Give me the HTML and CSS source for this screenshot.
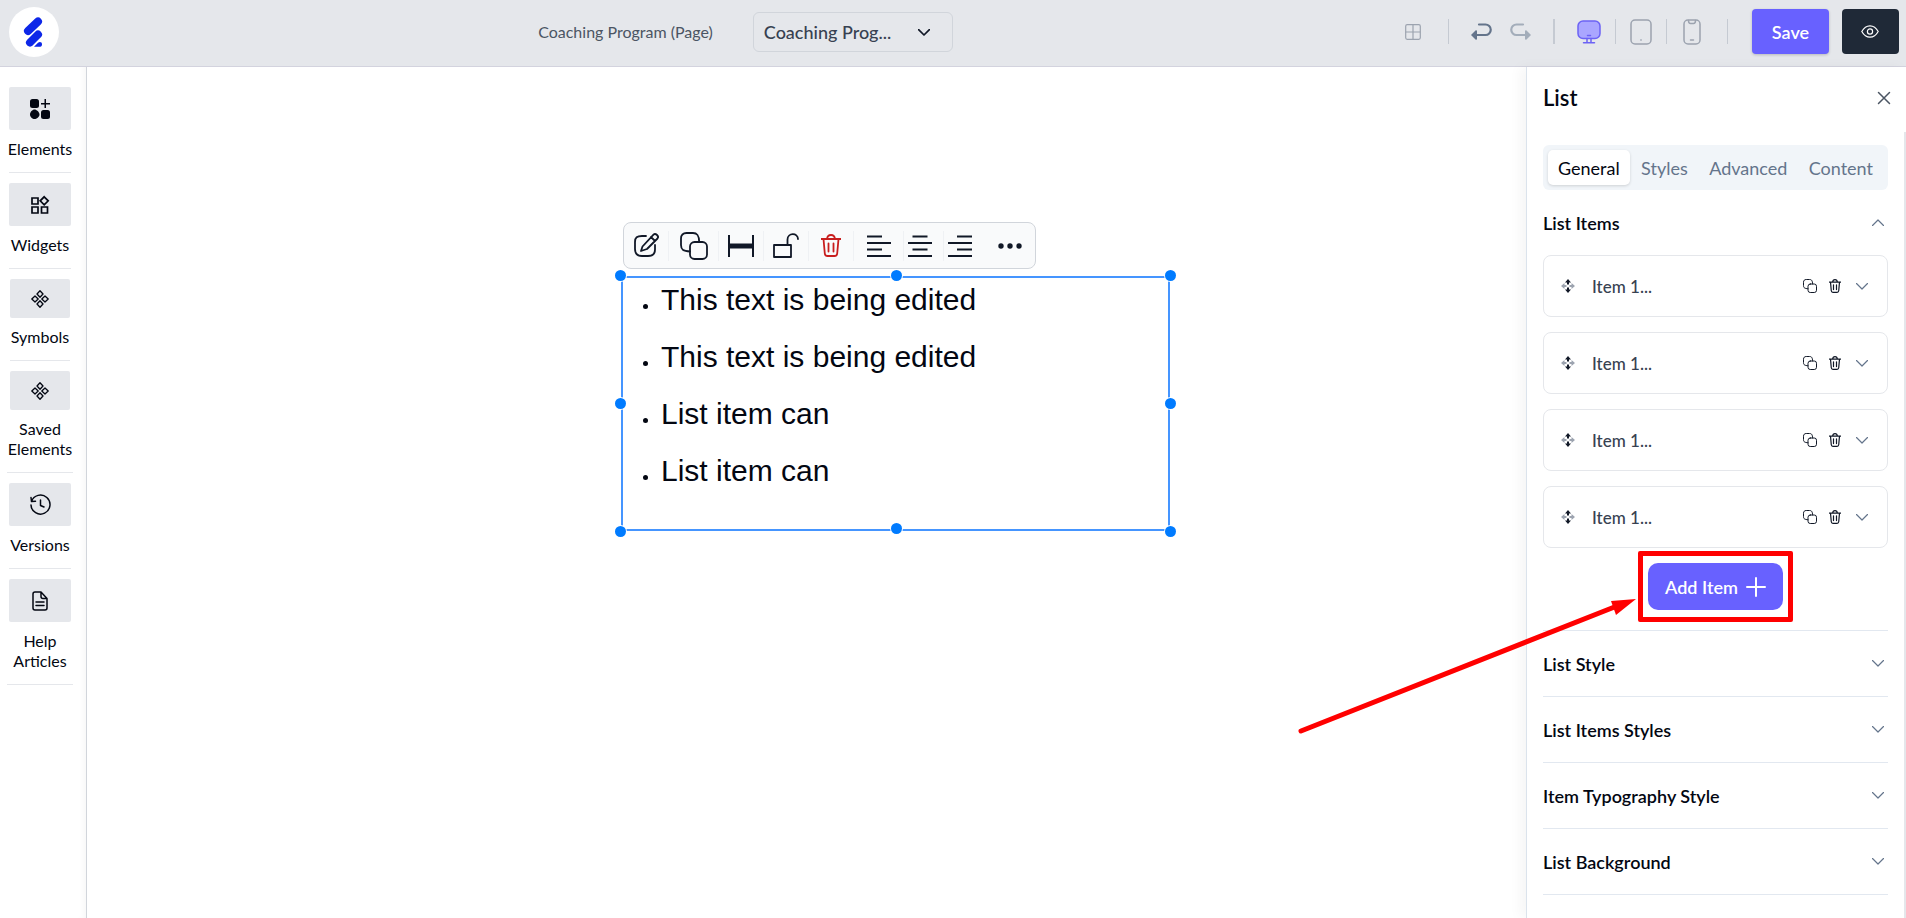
FILE: index.html
```html
<!DOCTYPE html>
<html lang="en">
<head>
    <meta charset="UTF-8" />
    <meta name="viewport" content="width=device-width, initial-scale=1.0" />
    <title>Coaching Program (Page) | Page Builder</title>
    <link rel="stylesheet" href="styles.css">
</head>
<body>
<!-- Shared icons -->
<svg class="sprite" aria-hidden="true">
    <symbol id="i-copy" viewBox="0 0 28 28">
        <rect x="10" y="10" width="17" height="17" rx="4.5" />
        <path d="M10 19.5C3.5 19 1 18 1 13V6.500C1 3 3 1 6.500 1H13c4.500 0 6 2.500 6.200 9" />
    </symbol>
    <symbol id="i-trash" viewBox="0 0 20 23">
        <path d="M0 5h20M2.500 5l1.300 14.500c.2 1.800 1 2.500 2.700 2.500h7c1.700 0 2.500-.7 2.700-2.500L17.500 5M6 5c.3-2.700 1.200-4 4-4s3.700 1.300 4 4M7.500 9.500v8M12.500 9.500v8" />
    </symbol>
    <symbol id="i-down" viewBox="0 0 12 7">
        <path d="M.5.5 6 6 11.500.5" />
    </symbol>
    <symbol id="i-move" viewBox="0 0 14 14">
        <path class="dark" d="M7 0l3 3.500H8V5.500H6V3.500H4zM7 14l3-3.500H8V8.500H6v2H4z" />
        <path class="light" d="M0 7l3.500-3v2h2v2h-2v2zM14 7l-3.500-3v2h-2v2h2v2z" />
    </symbol>
    <symbol id="i-diamonds" viewBox="0 0 18 18">
        <path d="M9 .8l3 3.200L9 7.200 6 4zM9 10.800l3 3.200-3 3.200L6 14zM4 6l3.200 3L4 12 .8 9zM14 6l3.200 3-3.200 3-3.200-3z" />
    </symbol>
</svg>

<header class="topbar">
    <a class="brand" href="#" aria-label="Home">
        <svg width="50" height="50" viewBox="0 0 50 50">
            <circle cx="25" cy="25" r="25" fill="#fff" />
            <g stroke="#0d27e8" stroke-width="8" stroke-linecap="round">
                <path d="M19 24l10-9.500" />
                <path d="M21 35.500l8-8" />
            </g>
            <path d="M25 39.800l4-4c2-1.500 4-.5 4 1.500s-1 2.500-2.500 2.500z" fill="#0d27e8" />
        </svg>
    </a>

    <div class="page-picker">
        <label for="page">Coaching Program (Page)</label>
        <div class="select-wrap">
            <select id="page">
                <option>Coaching Prog...</option>
            </select>
            <svg class="line" width="12" height="7"><use href="#i-down" /></svg>
        </div>
    </div>

    <div class="actions">
        <button class="icon-btn grid-btn" aria-label="Grid">
            <svg class="line" width="16" height="16" viewBox="0 0 16 16"><rect x=".7" y=".7" width="14.600" height="14.600" rx="1.500" /><path d="M8 1v14M1 8h14" /></svg>
        </button>
        <span class="sep"></span>
        <button class="icon-btn undo" aria-label="Undo">
            <svg width="20" height="17" viewBox="0 0 20 17"><path d="M8 1.500h6.500a4.800 4.800 0 0 1 0 10.500H5" fill="none" stroke="currentColor" stroke-width="2.200" stroke-linecap="round" /><path d="M0 12l4.500-4.500c.6-.5 1.500-.2 1.500.6v7.800c0 .8-.9 1.100-1.500.6z" fill="currentColor" /></svg>
        </button>
        <button class="icon-btn redo" aria-label="Redo">
            <svg width="20" height="17" viewBox="0 0 20 17"><path d="M12 1.500H5.500a4.800 4.800 0 0 0 0 10.500H15" fill="none" stroke="currentColor" stroke-width="2.200" stroke-linecap="round" /><path d="M20 12l-4.500-4.500c-.6-.5-1.500-.2-1.500.6v7.800c0 .8.9 1.100 1.500.6z" fill="currentColor" /></svg>
        </button>
        <span class="sep thick"></span>
        <button class="icon-btn device active" aria-label="Desktop">
            <svg class="line" width="24" height="24" viewBox="0 0 24 24"><rect x="1" y="1" width="22" height="17.500" rx="5" fill="#aaa6ff" /><path d="M10.500 15.500h3M10 18.500v3.500M14 18.500v3.500M6.500 22.700h11" /></svg>
        </button>
        <span class="sep"></span>
        <button class="icon-btn device" aria-label="Tablet">
            <svg class="line" width="22" height="26" viewBox="0 0 22 26"><rect x="1" y="1" width="20" height="24" rx="4" /><path d="M10.800 21h.4" /></svg>
        </button>
        <span class="sep"></span>
        <button class="icon-btn device" aria-label="Phone">
            <svg class="line" width="18" height="26" viewBox="0 0 18 26"><rect x="1" y="1" width="16" height="24" rx="4" /><path d="M5.500 1.500c0 2 .5 3 2 3h3c1.500 0 2-1 2-3M7.500 21h3" /></svg>
        </button>
        <span class="sep last"></span>
        <button class="save">Save</button>
        <button class="preview" aria-label="Preview">
            <svg width="18" height="13" viewBox="0 0 18 13" fill="none" stroke="#fff" stroke-width="1.200"><path d="M.8 6.500C3 2.500 6 .8 9 .8s6 1.700 8.200 5.700C15 10.500 12 12.200 9 12.200S3 10.500.8 6.500z" /><circle cx="9" cy="6.500" r="2.600" /></svg>
        </button>
    </div>
</header>

<div class="workspace">
    <nav class="sidebar">
        <a class="nav-item" href="#">
            <span class="tile"><svg width="20" height="20" viewBox="0 0 20 20" fill="currentColor"><rect x="0" y="0" width="9" height="9" rx="2.500" /><rect x="11" y="11" width="9" height="9" rx="2.500" /><path d="M4.500 10.500c2 0 5 2.500 5 5s-3 4.500-5 4.500-4.500-2-4.500-4.500 2.500-5 4.500-5zM14.500 0h1.500v4H20v1.500h-4V9h-1.500V5.500H11V4h3.500z" /></svg></span>
            <span>Elements</span>
        </a>
        <a class="nav-item" href="#">
            <span class="tile"><svg width="18" height="18" viewBox="0 0 18 18" fill="none" stroke="currentColor" stroke-width="1.700"><path d="M1 2h6v6H1zM1 11h6v6H1zM10.500 11h6v6h-6zM13.200.8l4 4-4 4-4-4z" /></svg></span>
            <span>Widgets</span>
        </a>
        <a class="nav-item small" href="#">
            <span class="tile"><svg class="line" width="18" height="18"><use href="#i-diamonds" /></svg></span>
            <span>Symbols</span>
        </a>
        <a class="nav-item small wide" href="#">
            <span class="tile"><svg class="line" width="18" height="18"><use href="#i-diamonds" /></svg></span>
            <span>Saved Elements</span>
        </a>
        <a class="nav-item" href="#">
            <span class="tile"><svg class="line" width="21" height="21" viewBox="0 0 21 21"><path d="M1.500 7.500A9.500 9.500 0 1 1 1 11M1 3.500l.5 4 4-.2M10.500 6v5.500l3.500 1.500" /></svg></span>
            <span>Versions</span>
        </a>
        <a class="nav-item wide" href="#">
            <span class="tile"><svg class="line" width="16" height="20" viewBox="0 0 16 20"><path d="M9 1H3C1.500 1 1 1.700 1 3v14c0 1.300.7 2 2 2h10c1.300 0 2-.7 2-2V7.500zV5.500c0 1.300.7 2 2 2h4M4 11h8M4 14.500h8" /></svg></span>
            <span>Help Articles</span>
        </a>
    </nav>

    <main class="canvas">
        <div class="selection">
            <div class="toolbar">
                <button aria-label="Edit"><svg class="line" width="25" height="25" viewBox="0 0 25 25"><path d="M12 3H8C3 3 1 4.500 1 9v7c0 5 2 7 7 7h6c5 0 7-2 7-6.500V12" /><path d="M8.500 13.500L19.500 1.700c2-2 6 1.500 4 3.800L13 16l-6 2zM17 4l4 4" /></svg></button>
                <button class="wide" aria-label="Duplicate"><svg class="line" width="28" height="28"><use href="#i-copy" /></svg></button>
                <button aria-label="Full width"><svg width="26" height="22" viewBox="0 0 26 22"><path d="M1 0v22M25 0v22" stroke="currentColor" stroke-width="2" /><path d="M1 11h24" stroke="currentColor" stroke-width="5" /></svg></button>
                <button aria-label="Unlock"><svg class="line" width="26" height="25" viewBox="0 0 26 25"><path d="M1 12h17v12H1zM14.500 12V6.500c0-7 10.500-7 10.500-.5" /></svg></button>
                <button class="danger" aria-label="Delete"><svg class="line" width="20" height="23"><use href="#i-trash" /></svg></button>
                <button class="wide" aria-label="Align left"><svg class="line bars" width="24" height="22" viewBox="0 0 24 22"><path d="M0 1.500h15M0 8h24M0 14.500h15M0 21h24" /></svg></button>
                <button class="narrow" aria-label="Align center"><svg class="line bars" width="24" height="22" viewBox="0 0 24 22"><path d="M4.500 1.500h15M0 8h24M4.500 14.500h15M0 21h24" /></svg></button>
                <button class="narrow" aria-label="Align right"><svg class="line bars" width="24" height="22" viewBox="0 0 24 22"><path d="M9 1.500h15M0 8h24M9 14.500h15M0 21h24" /></svg></button>
                <button class="more" aria-label="More"><svg width="24" height="6" viewBox="0 0 24 6" fill="currentColor"><circle cx="3" cy="3" r="2.700" /><circle cx="12" cy="3" r="2.700" /><circle cx="21" cy="3" r="2.700" /></svg></button>
            </div>
            <ul class="text-list">
                <li>This text is being edited</li>
                <li>This text is being edited</li>
                <li>List item can</li>
                <li>List item can</li>
            </ul>
            <i class="handle tl"></i>
            <i class="handle tc"></i>
            <i class="handle tr"></i>
            <i class="handle ml"></i>
            <i class="handle mr"></i>
            <i class="handle bl"></i>
            <i class="handle bc"></i>
            <i class="handle br"></i>
        </div>
    </main>

    <aside class="panel">
        <div class="panel-head">
            <h2>List</h2>
            <button class="icon-btn" aria-label="Close">
                <svg class="line" width="12" height="12" viewBox="0 0 12 12"><path d="M.5.5l11 11M11.500.5l-11 11" /></svg>
            </button>
        </div>
        <div class="panel-body">
            <div class="tabs" role="tablist">
                <button class="tab active" role="tab" aria-selected="true">General</button>
                <button class="tab" role="tab">Styles</button>
                <button class="tab" role="tab">Advanced</button>
                <button class="tab" role="tab">Content</button>
            </div>

            <section class="group">
                <button class="group-head open">List Items <svg class="line" width="12" height="7"><use href="#i-down" /></svg></button>
                <div class="cards">
                    <div class="card">
                        <svg class="move" width="14" height="14"><use href="#i-move" /></svg>
                        <span class="card-title">Item 1...</span>
                        <button class="icon-btn" aria-label="Duplicate item"><svg class="line" width="14" height="14"><use href="#i-copy" /></svg></button>
                        <button class="icon-btn" aria-label="Delete item"><svg class="line" width="12" height="14"><use href="#i-trash" /></svg></button>
                        <button class="icon-btn toggle" aria-label="Expand item"><svg class="line" width="12" height="7"><use href="#i-down" /></svg></button>
                    </div>
                    <div class="card">
                        <svg class="move" width="14" height="14"><use href="#i-move" /></svg>
                        <span class="card-title">Item 1...</span>
                        <button class="icon-btn" aria-label="Duplicate item"><svg class="line" width="14" height="14"><use href="#i-copy" /></svg></button>
                        <button class="icon-btn" aria-label="Delete item"><svg class="line" width="12" height="14"><use href="#i-trash" /></svg></button>
                        <button class="icon-btn toggle" aria-label="Expand item"><svg class="line" width="12" height="7"><use href="#i-down" /></svg></button>
                    </div>
                    <div class="card">
                        <svg class="move" width="14" height="14"><use href="#i-move" /></svg>
                        <span class="card-title">Item 1...</span>
                        <button class="icon-btn" aria-label="Duplicate item"><svg class="line" width="14" height="14"><use href="#i-copy" /></svg></button>
                        <button class="icon-btn" aria-label="Delete item"><svg class="line" width="12" height="14"><use href="#i-trash" /></svg></button>
                        <button class="icon-btn toggle" aria-label="Expand item"><svg class="line" width="12" height="7"><use href="#i-down" /></svg></button>
                    </div>
                    <div class="card">
                        <svg class="move" width="14" height="14"><use href="#i-move" /></svg>
                        <span class="card-title">Item 1...</span>
                        <button class="icon-btn" aria-label="Duplicate item"><svg class="line" width="14" height="14"><use href="#i-copy" /></svg></button>
                        <button class="icon-btn" aria-label="Delete item"><svg class="line" width="12" height="14"><use href="#i-trash" /></svg></button>
                        <button class="icon-btn toggle" aria-label="Expand item"><svg class="line" width="12" height="7"><use href="#i-down" /></svg></button>
                    </div>
                </div>
                <div class="add-row">
                    <div class="highlight">
                        <button class="add-btn">Add Item <svg width="20" height="20" viewBox="0 0 20 20"><path d="M10 1v18M1 10h18" stroke="#fff" stroke-width="2" stroke-linecap="round" /></svg></button>
                        <svg class="arrow" width="350" height="145" viewBox="0 0 350 145"><path d="M6 136L322 11" stroke="#f00" stroke-width="5" stroke-linecap="round" /><path d="M341 4l-25 2 5 14z" fill="#f00" /></svg>
                    </div>
                </div>
            </section>

            <section class="group">
                <button class="group-head">List Style <svg class="line" width="12" height="7"><use href="#i-down" /></svg></button>
            </section>
            <section class="group">
                <button class="group-head">List Items Styles <svg class="line" width="12" height="7"><use href="#i-down" /></svg></button>
            </section>
            <section class="group">
                <button class="group-head">Item Typography Style <svg class="line" width="12" height="7"><use href="#i-down" /></svg></button>
            </section>
            <section class="group">
                <button class="group-head">List Background <svg class="line" width="12" height="7"><use href="#i-down" /></svg></button>
            </section>
        </div>
    </aside>
</div>
</body>
</html>
```

FILE: styles.css
```css
* {
    box-sizing: border-box;
}

body {
    margin: 0;
    height: 100vh;
    display: flex;
    flex-direction: column;
    overflow: hidden;
    font-family: Lato, "Open Sans", sans-serif;
    font-size: 16px;
    color: #030712;
    background: #fff;
}

button,
select {
    font: inherit;
    color: inherit;
    border: none;
    background: none;
    padding: 0;
    cursor: pointer;
}

a {
    color: inherit;
    text-decoration: none;
}

svg {
    display: block;
    flex: none;
    overflow: visible;
}

.sprite {
    position: absolute;
    width: 0;
    height: 0;
}

/* Outline icons */
.line {
    fill: none;
    stroke: currentColor;
    stroke-width: 1.5;
    stroke-linecap: round;
    stroke-linejoin: round;
}

.icon-btn {
    display: flex;
    align-items: center;
    justify-content: center;
}

/* Top bar */
.topbar {
    display: flex;
    align-items: center;
    justify-content: space-between;
    height: 67px;
    flex: none;
    padding: 0 7px 3px 0;
    background: #e5e7eb;
    border-bottom: 1px solid #d3d3de;
}

.brand {
    width: 86px;
    padding-left: 9px;
}

.page-picker {
    display: flex;
    align-items: center;
    gap: 40px;
    color: #4b5563;
}

.select-wrap {
    position: relative;
    color: #111827;
}

.select-wrap select {
    appearance: none;
    width: 200px;
    height: 40px;
    padding: 0 10px;
    border: 1px solid #d1d5db;
    border-radius: 6px;
    font-size: 18px;
    font-weight: 500;
    color: #374151;
}

.select-wrap svg {
    position: absolute;
    right: 23px;
    top: 17px;
    stroke-width: 1.7;
    pointer-events: none;
}

.actions {
    display: flex;
    align-items: center;
}

.sep {
    width: 1px;
    height: 25px;
    background: #c5cad2;
}

.sep.thick {
    width: 2px;
}

.sep.last {
    margin: 0 24px 0 10px;
}

.grid-btn {
    margin-right: 27px;
    color: #9ca3af;
}

.grid-btn svg {
    stroke-width: 1.2;
}

.undo,
.redo {
    width: 40px;
}

.undo {
    margin-left: 12px;
    color: #64748b;
}

.redo {
    margin-right: 12px;
    color: #a3adba;
}

.device {
    width: 50px;
    color: #9ca3af;
}

.device.active {
    width: 60px;
    padding-left: 8px;
    color: #6c63f5;
}

.save,
.preview {
    height: 45px;
    border-radius: 4px;
    color: #fff;
}

.save {
    width: 77px;
    margin-right: 13px;
    background: #6861ff;
    font-size: 18px;
    font-weight: 600;
    box-shadow: 0 1px 3px rgba(0, 0, 0, 0.2);
}

.preview {
    display: flex;
    align-items: center;
    justify-content: center;
    width: 57px;
    background: #1f2937;
}

/* Left navigation */
.workspace {
    display: flex;
    flex: 1;
    min-height: 0;
}

.sidebar {
    display: flex;
    flex-direction: column;
    align-items: center;
    gap: 10px;
    width: 87px;
    flex: none;
    padding: 20px 6px 0 0;
    border-right: 1px solid #d1d5db;
    box-shadow: inset -6px 0 6px -4px rgba(0, 0, 0, 0.04);
}

.nav-item {
    display: flex;
    flex-direction: column;
    align-items: center;
    gap: 9px;
    width: 62px;
    padding-bottom: 13px;
    border-bottom: 1px solid #e5e7eb;
    line-height: 20px;
    text-align: center;
}

.tile {
    display: flex;
    align-items: center;
    justify-content: center;
    width: 62px;
    height: 43px;
    border-radius: 2px;
    background: #e5e7eb;
}

.nav-item.small {
    width: 60px;
}

.nav-item.small .tile {
    width: 60px;
    height: 39px;
}

.nav-item.small .line {
    stroke-width: 1.3;
}

.nav-item.wide {
    width: 66px;
}

/* Canvas */
.canvas {
    flex: 1;
    display: flex;
    justify-content: center;
    align-items: flex-start;
    padding: 209px 0 0 178px;
}

.selection {
    position: relative;
    width: 549px;
    padding-bottom: 14px;
    border: 2px solid #4595ff;
}

.toolbar {
    position: absolute;
    left: 0;
    bottom: 100%;
    display: flex;
    align-items: center;
    height: 47px;
    margin-bottom: 9px;
    border: 1px solid #d1d5db;
    border-radius: 8px;
    background: #f9fafb;
    color: #111827;
}

.toolbar button {
    display: flex;
    align-items: center;
    justify-content: center;
    width: 45px;
    height: 30px;
    border-right: 1px solid #eff1f4;
}

.toolbar .wide {
    width: 50px;
}

.toolbar .narrow {
    width: 40px;
    padding-right: 8px;
}

.toolbar .more {
    width: 50px;
    margin-left: 1px;
    border-right: none;
}

.toolbar .narrow:nth-last-child(2) {
    border-right: none;
}

.toolbar .danger {
    color: #c81e1e;
}

.toolbar .line {
    stroke-width: 1.8;
}

.toolbar .bars {
    stroke-width: 2;
    stroke-linecap: butt;
}

.text-list {
    margin: 0;
    padding: 0 10px 9px 20px;
    list-style: none;
    font-family: "Liberation Sans", Arial, sans-serif;
    font-size: 30px;
    line-height: 43px;
}

.text-list li {
    display: flex;
    align-items: center;
    gap: 13px;
    padding-bottom: 14px;
}

.text-list li::before {
    content: "";
    width: 5px;
    height: 5px;
    margin-top: 14px;
    border-radius: 50%;
    background: #030712;
}

/* Resize handles */
.handle {
    position: absolute;
    width: 11px;
    height: 11px;
    border-radius: 50%;
    background: #007bff;
    box-shadow: 0 0 0 1px #fff;
}

.tl, .tc, .tr { top: -8px; }
.ml, .mr { top: calc(50% - 6px); }
.bl, .br { bottom: -8px; }
.bc { bottom: -5px; }
.tl, .ml, .bl { left: -8px; }
.tr, .mr, .br { right: -8px; }
.tc, .bc { left: calc(50% - 5px); }

/* Settings panel */
.panel {
    display: flex;
    flex-direction: column;
    width: 380px;
    flex: none;
    border-left: 1px solid #dbe3ec;
    background: #fff;
    box-shadow: -6px 0 12px rgba(0, 0, 0, 0.04);
}

.panel-head {
    display: flex;
    align-items: center;
    justify-content: space-between;
    height: 65px;
    flex: none;
    padding: 0 16px 4px;
    color: #4b5563;
}

.panel-head h2 {
    margin: 0;
    font-size: 22px;
    font-weight: 600;
    color: #030712;
}

.panel-body {
    flex: 1;
    padding: 13px 16px 0;
    border-right: 2px solid #e5e7eb;
}

.tabs {
    display: flex;
    justify-content: space-between;
    padding: 5px;
    border-radius: 6px;
    background: #f1f5f9;
}

.tab {
    height: 35px;
    padding: 0 10px;
    border-radius: 5px;
    font-size: 18px;
    font-weight: 400;
    color: #64748b;
}

.tab.active {
    background: #fff;
    color: #030712;
    box-shadow: 0 1px 3px rgba(0, 0, 0, 0.15);
}

.group {
    border-bottom: 1px solid #e2e8f0;
}

.group-head {
    display: flex;
    align-items: center;
    justify-content: space-between;
    width: 100%;
    height: 65px;
    padding-right: 4px;
    font-size: 18px;
    font-weight: 600;
}

.group-head svg {
    color: #64748b;
    stroke-width: 1.2;
}

.group-head.open svg {
    transform: rotate(180deg);
}

.cards {
    display: flex;
    flex-direction: column;
    gap: 15px;
}

.card {
    display: flex;
    align-items: center;
    height: 62px;
    padding: 0 19px 0 17px;
    border: 1px solid #e5e7eb;
    border-radius: 8px;
    color: #111827;
}

.card .icon-btn {
    width: 25px;
}

.card .icon-btn .line {
    stroke-width: 2;
}

.card .toggle {
    width: 12px;
    margin-left: 9px;
    color: #64748b;
}

.card .toggle .line {
    stroke-width: 1.2;
}

.card-title {
    flex: 1;
    margin-left: 17px;
    font-size: 17px;
    font-weight: 500;
    color: #374151;
}

.dark {
    fill: #111827;
}

.light {
    fill: #9ca3af;
}

.add-row {
    display: flex;
    justify-content: center;
    padding: 15px 0 20px;
}

.add-btn {
    display: flex;
    align-items: center;
    justify-content: center;
    gap: 8px;
    width: 135px;
    height: 47px;
    border-radius: 10px;
    background: #6861ff;
    color: #fff;
    font-size: 18px;
    font-weight: 600;
}

/* Callout drawn round the add button */
.highlight {
    position: relative;
}

.highlight::after {
    content: "";
    position: absolute;
    inset: -12px -10px;
    border: 5px solid #f00;
    border-radius: 2px;
    pointer-events: none;
}

.arrow {
    position: absolute;
    right: calc(100% + 3px);
    top: 32px;
    pointer-events: none;
}
```
